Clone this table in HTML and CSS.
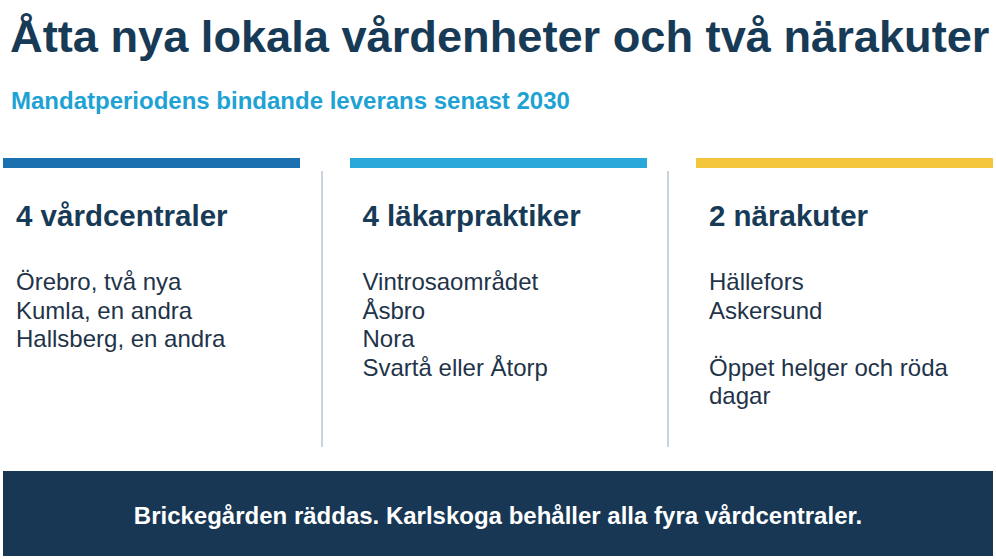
FILE: index.html
```html
<!DOCTYPE html>
<html lang="sv">
<head>
<meta charset="utf-8">
<title>Åtta nya lokala vårdenheter</title>
<link rel="stylesheet" href="styles.css">
</head>
<body>
<div class="page">
  <header class="head">
    <h1 class="title">Åtta nya lokala vårdenheter och två närakuter</h1>
    <p class="subtitle">Mandatperiodens bindande leverans senast 2030</p>
  </header>
  <section class="cols">
    <div class="col">
      <div class="bar bar-blue"></div>
      <h2 class="col-title">4 vårdcentraler</h2>
      <p class="col-text">Örebro, två nya<br>Kumla, en andra<br>Hallsberg, en andra</p>
    </div>
    <div class="sep"><div class="sep-line"></div></div>
    <div class="col">
      <div class="bar bar-cyan"></div>
      <h2 class="col-title">4 läkarpraktiker</h2>
      <p class="col-text">Vintrosaområdet<br>Åsbro<br>Nora<br>Svartå eller Åtorp</p>
    </div>
    <div class="sep"><div class="sep-line sep-line-2"></div></div>
    <div class="col">
      <div class="bar bar-yellow"></div>
      <h2 class="col-title">2 närakuter</h2>
      <p class="col-text">Hällefors<br>Askersund<br><br>Öppet helger och röda dagar</p>
    </div>
  </section>
  <footer class="foot">
    <p class="foot-text">Brickegården räddas. Karlskoga behåller alla fyra vårdcentraler.</p>
  </footer>
</div>
</body>
</html>
```
FILE: styles.css
```css
* { box-sizing: border-box; }
html, body { margin: 0; padding: 0; background: #ffffff; }
body {
  font-family: "Liberation Sans", Arial, Helvetica, sans-serif;
  width: 996px;
  height: 559px;
  overflow: hidden;
}
.page {
  padding: 0 3px;
}
.head {
  padding-left: 7px;
}
.title {
  margin: 11px 0 0 0;
  font-size: 45.2px;
  line-height: 52px;
  font-weight: 700;
  color: #173a56;
  white-space: nowrap;
}
.subtitle {
  margin: 24px 0 0 1px;
  font-size: 24px;
  line-height: 28px;
  font-weight: 700;
  color: #1ea2d3;
}
.cols {
  margin-top: 43px;
  display: grid;
  grid-template-columns: 297px 1fr 297px 1fr 297px;
}
.bar {
  height: 10px;
}
.bar-blue { background: #1b70b0; }
.bar-cyan { background: #29a9d9; }
.bar-yellow { background: #f3c53c; }
.col-title {
  margin: 31px 0 0 13px;
  font-size: 29.5px;
  line-height: 34px;
  font-weight: 700;
  color: #173a56;
}
.col-text {
  margin: 35px 10px 0 13px;
  font-size: 24px;
  line-height: 28.5px;
  color: #1f3449;
}
.sep {
  display: flex;
}
.sep-line {
  margin: 13px 0 0 21px;
  width: 2px;
  height: 276px;
  background: #c9d3dd;
}
.sep-line-2 {
  margin-left: 20px;
}
.foot {
  margin-top: 24px;
  height: 85px;
  padding-top: 4px;
  background: #173754;
  display: flex;
  align-items: center;
  justify-content: center;
}
.foot-text {
  margin: 0;
  font-size: 24px;
  font-weight: 700;
  color: #ffffff;
}
```
